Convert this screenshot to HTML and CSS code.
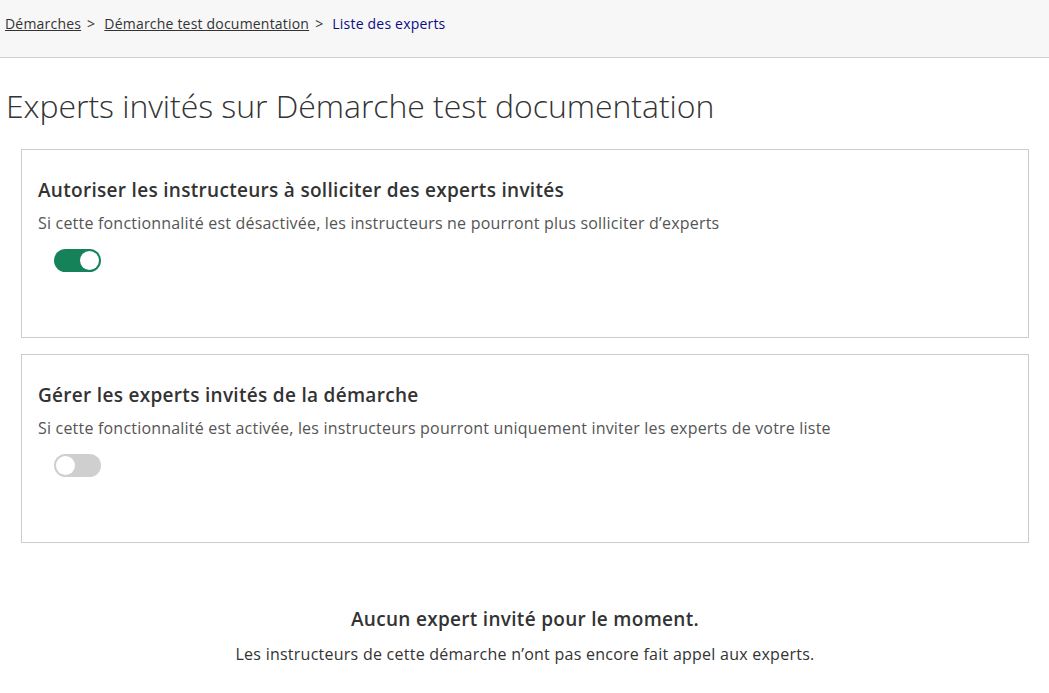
FILE: index.html
```html
<!DOCTYPE html>
<html lang="fr">
<head>
<meta charset="utf-8">
<title>Liste des experts</title>
<link rel="stylesheet" href="styles.css">
</head>
<body>
<header class="topbar">
  <nav class="breadcrumbs">
    <a href="#" class="crumb-link">Démarches</a>
    <span class="sep">&gt;</span>
    <a href="#" class="crumb-link">Démarche test documentation</a>
    <span class="sep">&gt;</span>
    <span class="crumb-current">Liste des experts</span>
  </nav>
</header>
<main class="page">
  <h1 class="page-title">Experts invités sur Démarche test documentation</h1>
  <div class="cards">
    <section class="card">
      <h2 class="card-title">Autoriser les instructeurs à solliciter des experts invités</h2>
      <p class="card-desc">Si cette fonctionnalité est désactivée, les instructeurs ne pourront plus solliciter d’experts</p>
      <span class="toggle toggle-on"><span class="knob"></span></span>
    </section>
    <section class="card">
      <h2 class="card-title">Gérer les experts invités de la démarche</h2>
      <p class="card-desc">Si cette fonctionnalité est activée, les instructeurs pourront uniquement inviter les experts de votre liste</p>
      <span class="toggle toggle-off"><span class="knob"></span></span>
    </section>
  </div>
  <div class="empty">
    <h3 class="empty-title">Aucun expert invité pour le moment.</h3>
    <p class="empty-desc">Les instructeurs de cette démarche n’ont pas encore fait appel aux experts.</p>
  </div>
</main>
</body>
</html>
```

FILE: styles.css
```css
* { box-sizing: border-box; }
html, body { margin: 0; padding: 0; background: #fff; }
body {
  font-family: "Open Sans", "Noto Sans", sans-serif;
  color: #333;
}
.topbar {
  background: #f7f7f7;
  border-bottom: 1px solid #d0d0d0;
  height: 58px;
  display: flex;
  align-items: center;
  padding: 0 5px 11px;
}
.breadcrumbs {
  display: flex;
  align-items: center;
  font-size: 14px;
  letter-spacing: 0.2px;
}
.crumb-link { color: #333; text-decoration: underline; }
.sep { color: #333; margin: 0 9px 0 6px; }
.crumb-current { color: #0e0a85; }
.page { padding: 0 20px 0 21px; }
.page-title {
  font-weight: 300;
  font-size: 32px;
  letter-spacing: -0.05px;
  margin: 26px 0 22px -15px;
  color: #333;
}
.cards { display: flex; flex-direction: column; gap: 16px; }
.card {
  border: 1px solid #ccc;
  height: 189px;
  padding: 27px 16px 0;
}
.card-title {
  font-size: 19px;
  font-weight: 600;
  letter-spacing: 0.3px;
  margin: 0 0 9px;
  color: #333;
}
.card-desc {
  font-size: 16px;
  letter-spacing: 0.2px;
  color: #555;
  margin: 0 0 15px;
}
.toggle {
  display: block;
  width: 47px;
  height: 23px;
  border-radius: 12px;
  margin-left: 16px;
  position: relative;
}
.toggle-on { background: #16825a; }
.toggle-off { background: #cfcfcf; }
.knob {
  position: absolute;
  top: 2px;
  width: 19px;
  height: 19px;
  border-radius: 50%;
  background: #fff;
}
.toggle-on .knob { right: 2px; }
.toggle-off .knob { left: 2px; }
.empty { text-align: center; margin-top: 63px; }
.empty-title { font-size: 19px; font-weight: 600; letter-spacing: 0.3px; margin: 0 0 11px; color: #333; }
.empty-desc { font-size: 16px; letter-spacing: 0.25px; margin: 0; color: #333; }
```
